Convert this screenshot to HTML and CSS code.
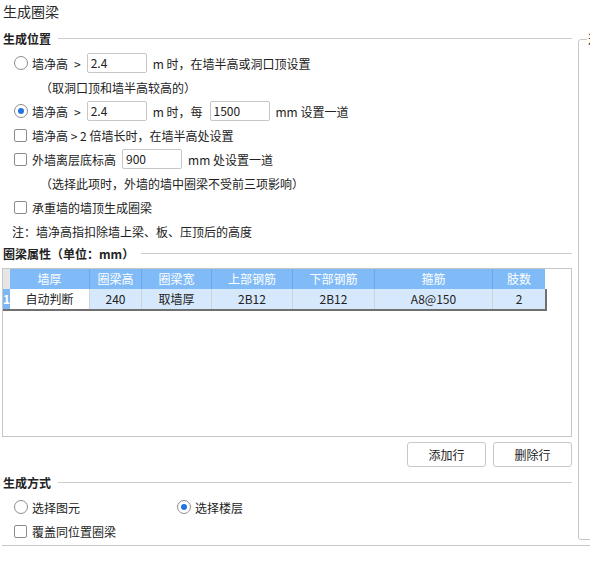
FILE: index.html
```html
<!DOCTYPE html>
<html lang="zh-CN">
<head>
<meta charset="utf-8">
<title>生成圈梁</title>
<link rel="stylesheet" href="styles.css">
</head>
<body>
<div class="page">
  <div class="top">
    <div class="main">
      <div class="title">生成圈梁</div>

      <div class="sec-head"><span class="sec-label">生成位置</span><span class="rule"></span></div>

      <div class="row">
        <span class="radio"></span><span class="lbl">墙净高</span><span class="gt">&gt;</span>
        <span class="input">2.4</span><span class="after">m 时，在墙半高或洞口顶设置</span>
      </div>
      <div class="row note">（取洞口顶和墙半高较高的）</div>
      <div class="row">
        <span class="radio checked"></span><span class="lbl">墙净高</span><span class="gt">&gt;</span>
        <span class="input">2.4</span><span class="after">m 时，每</span>
        <span class="input input-b">1500</span><span class="after">mm 设置一道</span>
      </div>
      <div class="row">
        <span class="check"></span><span class="lbl">墙净高 &gt; 2 倍墙长时，在墙半高处设置</span>
      </div>
      <div class="row">
        <span class="check"></span><span class="lbl">外墙离层底标高</span>
        <span class="input input-c">900</span><span class="after">mm 处设置一道</span>
      </div>
      <div class="row note">（选择此项时，外墙的墙中圈梁不受前三项影响）</div>
      <div class="row">
        <span class="check"></span><span class="lbl">承重墙的墙顶生成圈梁</span>
      </div>
      <div class="row remark">注：墙净高指扣除墙上梁、板、压顶后的高度</div>

      <div class="sec-head sec-head-2"><span class="sec-label">圈梁属性（单位：mm）</span><span class="rule"></span></div>

      <div class="grid-frame">
        <div class="grid-row grid-head">
          <div class="rh corner"></div>
          <div class="hc">墙厚</div>
          <div class="hc">圈梁高</div>
          <div class="hc">圈梁宽</div>
          <div class="hc">上部钢筋</div>
          <div class="hc">下部钢筋</div>
          <div class="hc">箍筋</div>
          <div class="hc">肢数</div>
        </div>
        <div class="grid-row grid-data">
          <div class="rh num">1</div>
          <div class="dc current">自动判断</div>
          <div class="dc">240</div>
          <div class="dc">取墙厚</div>
          <div class="dc">2B12</div>
          <div class="dc">2B12</div>
          <div class="dc">A8@150</div>
          <div class="dc">2</div>
        </div>
      </div>

      <div class="btn-row">
        <button class="btn" type="button">添加行</button>
        <button class="btn" type="button">删除行</button>
      </div>

      <div class="sec-head sec-head-3"><span class="sec-label">生成方式</span><span class="rule"></span></div>

      <div class="row opts">
        <span class="opt opt-a"><span class="radio"></span><span class="lbl">选择图元</span></span>
        <span class="opt"><span class="radio checked"></span><span class="lbl">选择楼层</span></span>
      </div>
      <div class="row">
        <span class="check"></span><span class="lbl">覆盖同位置圈梁</span>
      </div>
    </div>

    <div class="side">
      <span class="side-legend">选</span>
    </div>
  </div>
  <div class="bottom-rule"></div>
</div>
</body>
</html>
```

FILE: styles.css
```css
html, body {
  margin: 0;
  padding: 0;
  background: #ffffff;
}

body {
  width: 590px;
  height: 570px;
  overflow: hidden;
  font-family: "Noto Sans CJK SC", "Noto Sans", sans-serif;
  font-size: 12px;
  color: #222222;
}

.page {
  width: 620px;
}

.top {
  display: flex;
  align-items: flex-start;
  gap: 6px;
}

.main {
  width: 572px;
  flex: none;
  display: flex;
  flex-direction: column;
}

.title {
  height: 23px;
  line-height: 23px;
  padding-left: 3px;
  font-size: 14px;
  color: #2a2a2a;
}

.sec-head {
  display: flex;
  align-items: center;
  height: 17px;
  margin-top: 7px;
  margin-bottom: 4px;
  padding-left: 3px;
}

.sec-label {
  font-weight: bold;
  white-space: nowrap;
  line-height: 17px;
}

.rule {
  flex: 1;
  height: 1px;
  background: #cdcdcd;
  margin-left: 7px;
}

.sec-head-2 {
  height: 18px;
  margin-top: 1px;
  margin-bottom: 6px;
}

.sec-head-3 {
  margin-top: 7px;
  margin-bottom: 4px;
}

.row {
  height: 24px;
  display: flex;
  align-items: center;
  padding-left: 14px;
  white-space: nowrap;
}

.note {
  padding-left: 40px;
}

.remark {
  padding-left: 12px;
}

.radio {
  width: 14px;
  height: 14px;
  box-sizing: border-box;
  border: 1px solid #8c8c8c;
  border-radius: 50%;
  background: #ffffff;
  flex: none;
  margin-right: 4px;
  display: flex;
  align-items: center;
  justify-content: center;
}

.radio.checked::after {
  content: "";
  width: 6px;
  height: 6px;
  border-radius: 50%;
  background: #1f74e0;
}

.check {
  width: 13px;
  height: 13px;
  box-sizing: border-box;
  border: 1px solid #8c8c8c;
  border-radius: 2px;
  background: #ffffff;
  flex: none;
  margin-right: 5px;
}

.gt {
  margin: 0 6px;
}

.input {
  width: 60px;
  height: 20px;
  box-sizing: border-box;
  border: 1px solid #c6c6c6;
  border-radius: 2px;
  padding-left: 3px;
  line-height: 18px;
  flex: none;
  background: #ffffff;
}

.input-b {
  margin-left: 7px;
}

.input-c {
  margin-left: 6px;
}

.after {
  margin-left: 6px;
}

.grid-frame {
  margin-left: 2px;
  width: 570px;
  height: 169px;
  box-sizing: border-box;
  border: 1px solid #c6c6c6;
  background: #ffffff;
}

.grid-row {
  display: grid;
  grid-template-columns: 7px 80px 52px 70px 81px 82px 118px 52px;
  height: 20px;
  width: 542px;
}

.grid-data {
  border-right: 2px solid #707070;
  border-bottom: 2px solid #707070;
}

.rh {
  overflow: hidden;
}

.corner {
  background: #e6e6e6;
}

.num {
  background: #7cb7f5;
  color: #ffffff;
  font-weight: bold;
  line-height: 20px;
  font-size: 12px;
  padding-left: 0;
}

.hc {
  background: #80bbf7;
  color: #ffffff;
  text-align: center;
  line-height: 20px;
  border-right: 1px solid #6aa7ee;
  overflow: hidden;
}

.hc:last-child {
  border-right: none;
}

.dc {
  background: #d6e8fc;
  text-align: center;
  line-height: 20px;
  border-right: 1px solid #cdd3da;
  overflow: hidden;
}

.dc:last-child {
  border-right: none;
}

.dc.current {
  background: #ffffff;
}

.btn-row {
  display: flex;
  justify-content: flex-end;
  gap: 7px;
  margin-top: 5px;
}

.btn {
  width: 79px;
  height: 25px;
  box-sizing: border-box;
  border: 1px solid #c8c8c8;
  border-radius: 3px;
  background: #ffffff;
  font-family: "Noto Sans CJK SC", "Noto Sans", sans-serif;
  font-size: 12px;
  color: #222222;
  padding: 0;
}

.opts {
  padding-left: 14px;
}

.opt {
  display: flex;
  align-items: center;
}

.opt-a {
  width: 163px;
}

.side {
  position: relative;
  flex: none;
  width: 40px;
  height: 501px;
  margin-top: 39px;
  box-sizing: border-box;
  border: 1px solid #c8c8c8;
  border-radius: 3px;
}

.side-legend {
  position: absolute;
  top: -9px;
  left: 8px;
  background: #ffffff;
  line-height: 16px;
  padding: 0 1px;
}

.bottom-rule {
  margin-top: 2px;
  margin-left: 2px;
  height: 1px;
  background: #c8c8c8;
  width: 600px;
}
```
